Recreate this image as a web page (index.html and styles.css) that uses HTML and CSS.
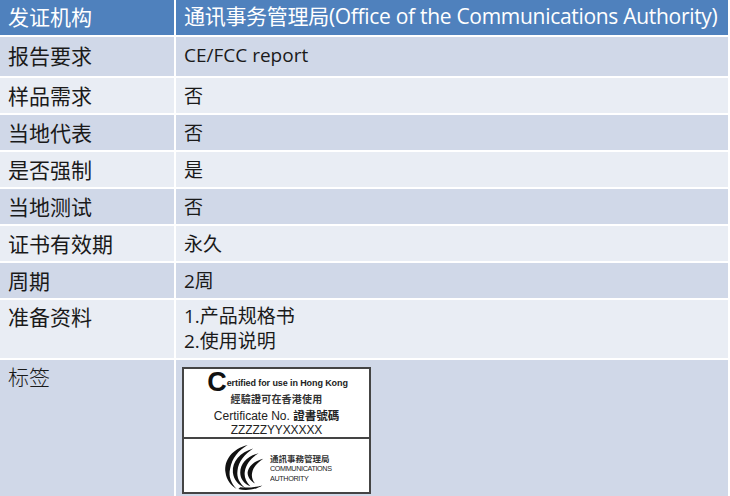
FILE: index.html
```html
<!DOCTYPE html>
<html lang="zh">
<head>
<meta charset="utf-8">
<link rel="stylesheet" href="styles.css">
</head>
<body>
<div class="table">
  <div class="cell head">发证机构</div>
  <div class="cell head val">通讯事务管理局(Office of the Communications Authority)</div>

  <div class="cell dark r1">报告要求</div>
  <div class="cell dark r1 val">CE/FCC report</div>

  <div class="cell light">样品需求</div>
  <div class="cell light val">否</div>

  <div class="cell dark">当地代表</div>
  <div class="cell dark val">否</div>

  <div class="cell light">是否强制</div>
  <div class="cell light val">是</div>

  <div class="cell dark">当地测试</div>
  <div class="cell dark val">否</div>

  <div class="cell light">证书有效期</div>
  <div class="cell light val">永久</div>

  <div class="cell dark">周期</div>
  <div class="cell dark val">2周</div>

  <div class="cell light multi">准备资料</div>
  <div class="cell light multi val">1.产品规格书<br>2.使用说明</div>

  <div class="cell dark last serif">标签</div>
  <div class="cell dark last labelcell">
    <div class="label">
      <div class="label-top">
        <div class="cert-line"><span class="bigc">C</span><span class="cert-rest">ertified for use in Hong Kong</span></div>
        <div class="cert-zh">經驗證可在香港使用</div>
        <div class="cert-no">Certificate No. <span class="zhb">證書號碼</span></div>
        <div class="cert-id">ZZZZZYYXXXXX</div>
      </div>
      <div class="label-bottom">
        <svg class="logo" width="46" height="52" viewBox="0 0 50 52">
          <path d="M30 2 C14 6 4 18 6 32 C7 40 12 46 18 50 C12 44 9 36 11 28 C13 16 20 8 30 2 Z" fill="#111"/>
          <path d="M36 6 C22 10 13 20 14 32 C15 40 20 46 28 49 C21 44 18 37 19 30 C20 20 27 12 36 6 Z" fill="#111"/>
          <path d="M42 11 C30 14 22 22 22 32 C22 39 26 44 33 47 C28 42 26 36 27 31 C28 23 34 16 42 11 Z" fill="#111"/>
          <path d="M47 17 C38 19 31 25 30 32 C30 37 33 41 38 44 C35 40 34 36 35 32 C36 26 41 21 47 17 Z" fill="#111"/>
          <path d="M20 50 C28 52 38 51 46 46 C38 48 30 49 22 48 Z" fill="#111"/>
        </svg>
        <div class="ca-text">
          <div class="ca-zh">通訊事務管理局</div>
          <div class="ca-en">COMMUNICATIONS</div>
          <div class="ca-en">AUTHORITY</div>
        </div>
      </div>
    </div>
  </div>
</div>
</body>
</html>
```

FILE: styles.css
```css
html, body {
  margin: 0;
  padding: 0;
  background: #ffffff;
}
body {
  width: 730px;
  height: 496px;
  overflow: hidden;
  font-family: "Open Sans", "Noto Sans CJK SC", sans-serif;
  color: #111;
}
.table {
  width: 728px;
  display: grid;
  grid-template-columns: 174px 552px;
  grid-template-rows: 35px 39px repeat(6, 35px) 58px 140px;
  column-gap: 2px;
  row-gap: 2px;
  background: #ffffff;
}
.cell {
  font-size: 21px;
  line-height: 24px;
  padding: 5px 0 0 8px;
  font-family: "Noto Sans CJK SC", sans-serif;
  white-space: nowrap;
  color: #1a1a1a;
}
.val {
  padding-left: 8px;
  padding-top: 6px;
  font-family: "Open Sans", "Noto Sans CJK SC", sans-serif;
  font-size: 19px;
}
.head {
  background: #4f81bd;
  color: #ffffff;
  padding-top: 4px;
}
.head.val {
  font-size: 21px;
  letter-spacing: -0.3px;
  color: #ffffff;
  padding-top: 4px;
}
.r1 {
  padding-top: 6px;
}
.dark {
  background: #d0d8e8;
}
.light {
  background: #e9edf4;
}
.multi {
  padding-top: 4px;
}
.multi.val {
  line-height: 25px;
  padding-top: 4px;
}
.serif {
  font-family: "Noto Sans CJK SC", serif;
  font-weight: 300;
  padding-top: 4px;
}
.labelcell {
  padding: 7px 0 0 6px;
}
.label {
  width: 185px;
  height: 123px;
  background: #ffffff;
  border: 2px solid #444;
  display: flex;
  flex-direction: column;
  font-family: "Liberation Sans", "Noto Sans CJK TC", sans-serif;
  color: #222;
}
.label-top {
  height: 68px;
  border-bottom: 2px solid #444;
  display: flex;
  flex-direction: column;
  align-items: center;
}
.cert-line {
  display: flex;
  align-items: flex-end;
  margin-top: 2px;
  height: 22px;
  margin-left: 2px;
}
.bigc {
  font-size: 27px;
  font-weight: 700;
  line-height: 22px;
  letter-spacing: -1px;
  color: #111;
}
.cert-rest {
  font-size: 9px;
  font-weight: 700;
  line-height: 12px;
  margin-bottom: 4px;
  margin-left: 1px;
  letter-spacing: -0.1px;
}
.cert-zh {
  font-size: 10px;
  line-height: 12px;
  font-weight: 700;
  font-family: "Noto Sans CJK TC", sans-serif;
  color: #333;
  letter-spacing: 0.2px;
}
.cert-no {
  font-size: 12px;
  line-height: 15px;
  margin-top: 3px;
}
.zhb {
  font-family: "Noto Sans CJK TC", sans-serif;
  font-weight: 700;
  font-size: 11.5px;
}
.cert-id {
  font-size: 12px;
  line-height: 13px;
  letter-spacing: -0.1px;
}
.label-bottom {
  flex: 1;
  display: flex;
  align-items: center;
  padding-left: 36px;
}
.logo {
  display: block;
  margin-top: 2px;
}
.ca-text {
  margin-left: 4px;
  margin-top: 4px;
  display: flex;
  flex-direction: column;
}
.ca-zh {
  font-family: "Noto Sans CJK TC", sans-serif;
  font-size: 8.5px;
  line-height: 12px;
  font-weight: 700;
  color: #333;
}
.ca-en {
  font-size: 8px;
  line-height: 10px;
  letter-spacing: -0.4px;
  color: #222;
  transform: scaleX(0.9);
  transform-origin: left;
}
```
